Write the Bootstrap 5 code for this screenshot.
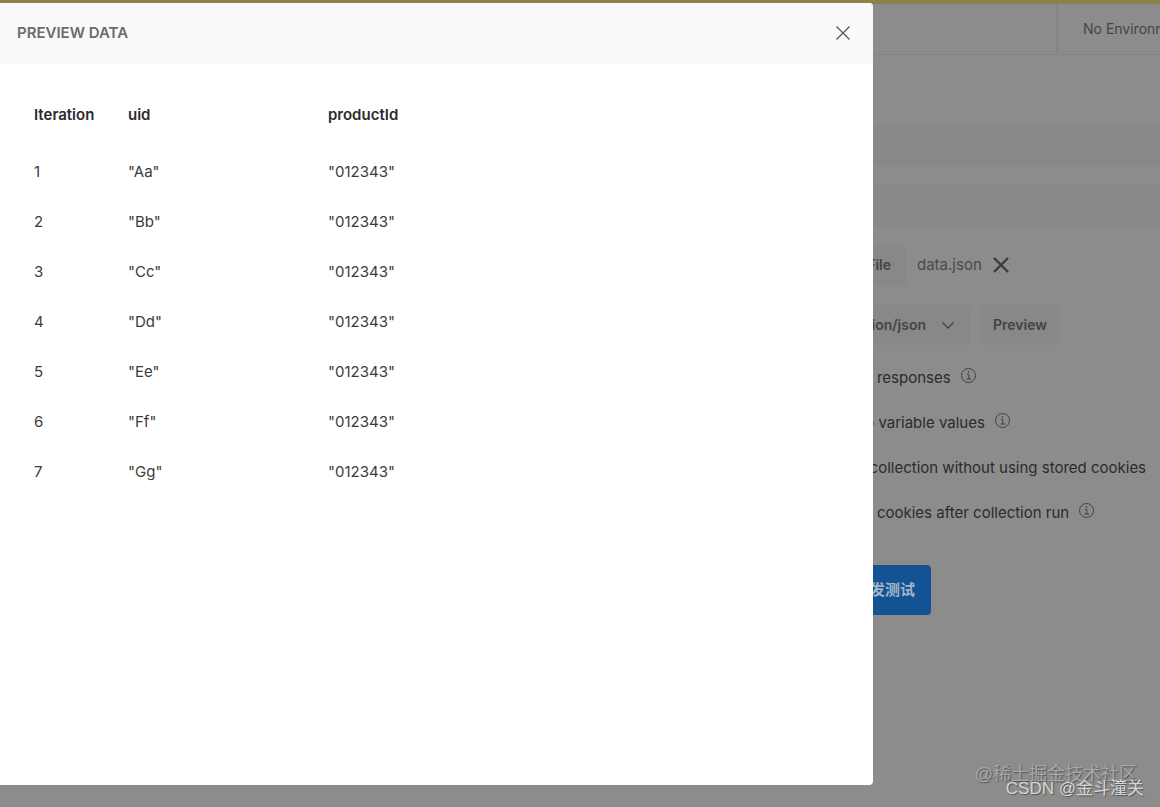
<!DOCTYPE html>
<html lang="en">
<head>
<meta charset="utf-8">
<meta name="viewport" content="width=device-width, initial-scale=1">
<title>Preview data</title>
<link href="https://cdn.jsdelivr.net/npm/bootstrap@5.3.0/dist/css/bootstrap.min.css" rel="stylesheet">
<style>
  :root { --side: 287px; --dim: #8c8c8c; --dim-band: #888888; }
  body { font-family: Inter, "Noto Sans CJK SC", sans-serif; font-size: 15px; line-height: 20px; background: var(--dim); color: #2b2b2b; }
  .app { min-height: 100vh; overflow: hidden; }
  .notice { height: 4px; background: #8b814a; }
  .topbar { height: 51px; border-bottom: 1px solid #838383; }
  .env { width: 104px; padding: 0 0 0 25px; border: 0; border-left: 2px solid #848484; background: none; color: #444; font-size: 14px; overflow: hidden; }
  .bands { padding-top: 69px; }
  .band { height: 42px; margin-bottom: 18px; background: var(--dim-band); }
  /* the runner form continues under the dialog's right edge */
  .runner { margin-left: calc(100% - var(--side) - 73px); padding-top: 1px; }
  .ctl { height: 40px; border: 0; border-radius: 3px; background-color: var(--dim-band); color: #444; font-size: 14px; font-weight: 600; }
  .pick { width: 106px; padding: 0 15px; text-align: right; }
  .mime { width: 171px; padding: 0 45px 0 16px; text-align: right; appearance: none; }
  .mime-wrap svg { right: 16px; top: 13px; }
  .show-data { width: 80px; padding: 0; margin-left: 1px; }
  .file-row { gap: 11px; }
  .fname { color: #4a4a4a; }
  .opts { padding-top: 10px; }
  .opt { height: 45px; }
  .opt input { width: 14px; height: 14px; margin: 0 8px 0 16px; }
  .opt svg { margin: -4px 0 0 9px; }
  .run { width: 131px; height: 50px; padding: 0 16px; margin-top: 30px; border: 0; border-radius: 4px; background: #135394; color: #a3b3c4; font-weight: 600; text-align: right; }
  .preview { top: 3px; left: 0; right: var(--side); bottom: 22px; border-radius: 0 4px 4px 0; background: #fff; overflow: hidden; }
  .preview-head { height: 61px; padding: 0 22px 2px 17px; background: #f9f9f9; }
  .preview-head h1 { font-size: 15px; line-height: 20px; font-weight: 600; color: #6b6b6b; }
  .x-btn { padding: 0; border: 0; background: none; }
  .grid-data { margin: 19px 0 0 34px; table-layout: fixed; width: calc(100% - 34px); }
  .grid-data th { height: 64px; padding: 0; font-weight: 600; color: #2b2b2b; }
  .grid-data td { height: 50px; padding: 0; color: #3c3c3c; }
  .c-iter { width: 94px; } .c-uid { width: 200px; }
  .stamp { white-space: nowrap; font-family: "Liberation Sans", "Noto Sans CJK SC", sans-serif; text-shadow: 1px 1px 1px #555; line-height: 20px; }
  .stamp-a { right: 23px; bottom: 23px; font-size: 18px; color: #a8a8a8; }
  .stamp-b { right: 16px; bottom: 8px; font-size: 17px; color: #d6d6d6; }
</style>
</head>
<body>
<div class="app position-relative">
  <div class="notice"></div>
  <header class="topbar d-flex justify-content-end">
    <button type="button" class="env text-start text-nowrap">No Environment</button>
  </header>
  <main>
    <div class="bands">
      <div class="band"></div>
      <div class="band"></div>
    </div>
    <form class="runner">
      <div class="file-row d-flex align-items-center">
        <button type="button" class="ctl pick text-nowrap">Select File</button>
        <span class="fname">data.json</span>
        <button type="button" class="x-btn d-flex" aria-label="Remove file">
          <svg width="16" height="16" viewBox="0 0 16 16" fill="none" stroke="#3c3c3c" stroke-width="2.4" aria-hidden="true"><path d="M1 1l14 14M15 1L1 15"/></svg>
        </button>
      </div>
      <div class="d-flex gap-2 pt-1 mt-3">
        <div class="mime-wrap position-relative">
          <select class="ctl mime" aria-label="Data file type"><option>application/json</option></select>
          <svg class="position-absolute" width="14" height="14" viewBox="0 0 14 14" fill="none" stroke="#444" stroke-width="1.3" aria-hidden="true"><path d="M1.5 4.5L7 10l5.500-5.500"/></svg>
        </div>
        <button type="button" class="ctl show-data">Preview</button>
      </div>
      <div class="opts">
        <div class="opt d-flex align-items-center"><input type="checkbox" id="o1"><label for="o1">Save responses</label><svg width="17" height="17" viewBox="0 0 17 17" fill="none" stroke="#414141" aria-hidden="true"><circle cx="8.500" cy="8.500" r="7"/><path d="M6.800 7.500h2v4.500M6.500 12h4.500" /><circle cx="8.500" cy="5" r=".5" fill="#414141"/></svg></div>
        <div class="opt d-flex align-items-center"><input type="checkbox" id="o2"><label for="o2">Keep variable values</label><svg width="17" height="17" viewBox="0 0 17 17" fill="none" stroke="#414141" aria-hidden="true"><circle cx="8.500" cy="8.500" r="7"/><path d="M6.800 7.500h2v4.500M6.500 12h4.500" /><circle cx="8.500" cy="5" r=".5" fill="#414141"/></svg></div>
        <div class="opt d-flex align-items-center"><input type="checkbox" id="o3"><label for="o3" class="text-nowrap">Run collection without using stored cookies</label></div>
        <div class="opt d-flex align-items-center"><input type="checkbox" id="o4"><label for="o4">Save cookies after collection run</label><svg width="17" height="17" viewBox="0 0 17 17" fill="none" stroke="#414141" aria-hidden="true"><circle cx="8.500" cy="8.500" r="7"/><path d="M6.800 7.500h2v4.500M6.500 12h4.500" /><circle cx="8.500" cy="5" r=".5" fill="#414141"/></svg></div>
      </div>
      <button type="button" class="run text-nowrap">Run 并发测试</button>
    </form>
  </main>

  <section class="preview position-absolute" role="dialog" aria-labelledby="pv">
    <div class="preview-head d-flex align-items-center justify-content-between">
      <h1 id="pv" class="m-0">PREVIEW DATA</h1>
      <button type="button" class="x-btn d-flex" aria-label="Close">
        <svg width="16" height="16" viewBox="0 0 16 16" fill="none" stroke="#555" stroke-width="1.200" aria-hidden="true"><path d="M1.500 1.500l13 13M14.500 1.500l-13 13"/></svg>
      </button>
    </div>
    <table class="grid-data">
      <thead><tr><th class="c-iter" scope="col">Iteration</th><th class="c-uid" scope="col">uid</th><th scope="col">productId</th></tr></thead>
      <tbody>
        <tr><td>1</td><td>"Aa"</td><td>"012343"</td></tr>
        <tr><td>2</td><td>"Bb"</td><td>"012343"</td></tr>
        <tr><td>3</td><td>"Cc"</td><td>"012343"</td></tr>
        <tr><td>4</td><td>"Dd"</td><td>"012343"</td></tr>
        <tr><td>5</td><td>"Ee"</td><td>"012343"</td></tr>
        <tr><td>6</td><td>"Ff"</td><td>"012343"</td></tr>
        <tr><td>7</td><td>"Gg"</td><td>"012343"</td></tr>
      </tbody>
    </table>
  </section>
  <div class="stamp stamp-a position-absolute">@稀土掘金技术社区</div>
  <div class="stamp stamp-b position-absolute">CSDN @金斗潼关</div>
</div>
<script src="https://cdn.jsdelivr.net/npm/bootstrap@5.3.0/dist/js/bootstrap.bundle.min.js"></script>
</body>
</html>
